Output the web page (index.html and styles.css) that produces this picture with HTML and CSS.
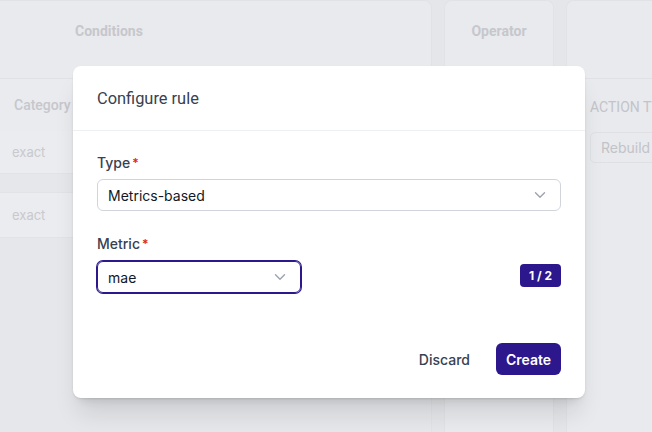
FILE: index.html
```html
<!DOCTYPE html>
<html>
<head>
<meta charset="utf-8">
<link rel="stylesheet" href="styles.css">
</head>
<body>
<div class="board">
  <div class="col col-cond">
    <div class="col-head head-left">Conditions</div>
    <div class="sub-head">Category</div>
    <div class="cell cell-a">exact</div>
    <div class="cell cell-b">exact</div>
  </div>
  <div class="col">
    <div class="col-head head-center">Operator</div>
  </div>
  <div class="col col-action">
    <div class="col-head"></div>
    <div class="action-body">
      <div class="action-label">ACTION TYPE</div>
      <div class="action-box">Rebuild</div>
    </div>
  </div>
</div>

<div class="modal">
  <div class="modal-head">Configure rule</div>
  <div class="modal-body">
    <div class="field">
      <label class="label">Type<span class="req">*</span></label>
      <div class="select select-full">
        <span>Metrics-based</span>
        <svg class="chev" width="12" height="8" viewBox="0 0 12 8"><path d="M1.5 1.8 6 6.2 10.5 1.8" fill="none" stroke="#9ca3af" stroke-width="1.4" stroke-linecap="round" stroke-linejoin="round"/></svg>
      </div>
    </div>
    <div class="field field-metric">
      <label class="label">Metric<span class="req">*</span></label>
      <div class="metric-row">
        <div class="select select-focus">
          <span>mae</span>
          <svg class="chev" width="12" height="8" viewBox="0 0 12 8"><path d="M1.5 1.8 6 6.2 10.5 1.8" fill="none" stroke="#9ca3af" stroke-width="1.4" stroke-linecap="round" stroke-linejoin="round"/></svg>
        </div>
        <span class="badge">1 / 2</span>
      </div>
    </div>
  </div>
  <div class="modal-foot">
    <button class="btn btn-ghost">Discard</button>
    <button class="btn btn-primary">Create</button>
  </div>
</div>
</body>
</html>
```
FILE: styles.css
```css
* { box-sizing: border-box; }
html, body { margin: 0; padding: 0; }
body {
  width: 652px;
  height: 432px;
  overflow: hidden;
  background: #e5e6e9;
  font-family: Inter, "Liberation Sans", sans-serif;
  position: relative;
}
.board {
  display: grid;
  grid-template-columns: 432px 110px 1fr;
  column-gap: 12px;
  height: 432px;
}
.col {
  background: #e9eaed;
  border: 1px solid #e1e2e5;
  border-bottom: none;
  border-radius: 8px 8px 0 0;
  display: flex;
  flex-direction: column;
  overflow: hidden;
  min-width: 0;
}
.col-action { border-right: none; border-radius: 8px 0 0 0; }
.col-cond {
  border-left: none;
  border-radius: 0 8px 0 0;
  background: #e6e7ea;
}
.col-head {
  height: 78px;
  flex: none;
  border-bottom: 1px solid #e0e1e4;
  display: flex;
  align-items: center;
  font-family: Roboto, sans-serif;
  font-weight: 700;
  font-size: 14px;
  color: #c6c7cc;
  background: #e9eaed;
}
.head-left { padding-left: 75px; padding-bottom: 18px; }
.head-center { justify-content: center; padding-bottom: 18px; }
.sub-head {
  height: 52px;
  background: #eaebee;
  display: flex;
  align-items: center;
  padding-left: 14px;
  font-family: Roboto, sans-serif;
  font-size: 14px;
  font-weight: 500;
  color: #c6c7cc;
}
.cell {
  display: flex;
  align-items: center;
  padding-left: 12px;
  font-size: 13px;
  color: #c8c9ce;
  background: #ebecef;
  border-bottom: 1px solid #e2e3e6;
}
.cell-a { height: 43px; }
.cell-b { height: 46px; margin-top: 18px; border-top: 1px solid #e2e3e6; }
.action-body {
  padding: 18px 0 0 23px;
}
.action-label {
  font-family: Roboto, sans-serif;
  font-size: 14px;
  color: #c3c4c9;
  height: 20px;
  line-height: 20px;
  white-space: nowrap;
}
.action-box {
  margin-top: 15px;
  width: 90px;
  height: 31px;
  border: 1px solid #dfe0e3;
  border-radius: 5px;
  font-size: 14px;
  color: #c2c3c8;
  display: flex;
  align-items: center;
  padding-left: 10px;
}

.modal {
  position: absolute;
  left: 73px;
  top: 66px;
  width: 512px;
  height: 332px;
  background: #fff;
  border-radius: 8px;
  box-shadow: 0 20px 25px -5px rgba(0,0,0,0.11), 0 8px 10px -6px rgba(0,0,0,0.11), 0 1px 2px rgba(0,0,0,0.09);
  display: flex;
  flex-direction: column;
}
.modal-head {
  height: 65px;
  border-bottom: 1px solid #eeeff1;
  padding: 0 24px;
  display: flex;
  align-items: center;
  font-family: Roboto, sans-serif;
  font-size: 16.4px;
  color: #374151;
}
.modal-body {
  padding: 22px 24px 0 24px;
  flex: 1;
}
.field { display: flex; flex-direction: column; }
.field-metric { margin-top: 23px; }
.label {
  font-size: 14px;
  font-weight: 500;
  color: #374151;
  line-height: 20px;
  margin-bottom: 6px;
}
.req { color: #e02424; margin-left: 2px; font-size: 12px; font-weight: 600; vertical-align: 1px; }
.select {
  height: 32px;
  border: 1px solid #d1d5db;
  border-radius: 6px;
  display: flex;
  align-items: center;
  justify-content: space-between;
  padding: 0 14px 0 10px;
  font-size: 14px;
  color: #111827;
}
.select-full { width: 464px; }
.metric-row {
  display: flex;
  align-items: center;
  justify-content: space-between;
  margin-top: 1px;
}
.select-focus {
  width: 204px;
  border-color: #2c178c;
  box-shadow: 0 0 0 1px #2c178c;
}
.badge {
  background: #2c178c;
  color: #fff;
  font-size: 12px;
  font-weight: 700;
  border-radius: 4px;
  height: 23px;
  width: 41px;
  justify-content: center;
  display: flex;
  align-items: center;
  margin-top: -3px;
}
.modal-foot {
  display: flex;
  justify-content: flex-end;
  align-items: center;
  gap: 16px;
  padding: 0 24px 23px 24px;
}
.btn {
  font-family: Inter, "Liberation Sans", sans-serif;
  font-size: 14px;
  height: 32px;
  border-radius: 6px;
  border: none;
  padding: 0 10px;
  cursor: pointer;
}
.btn-ghost { background: transparent; color: #374151; font-weight: 500; }
.btn-primary { background: #2c178c; color: #fff; font-weight: 600; width: 65px; padding: 0; }
```
